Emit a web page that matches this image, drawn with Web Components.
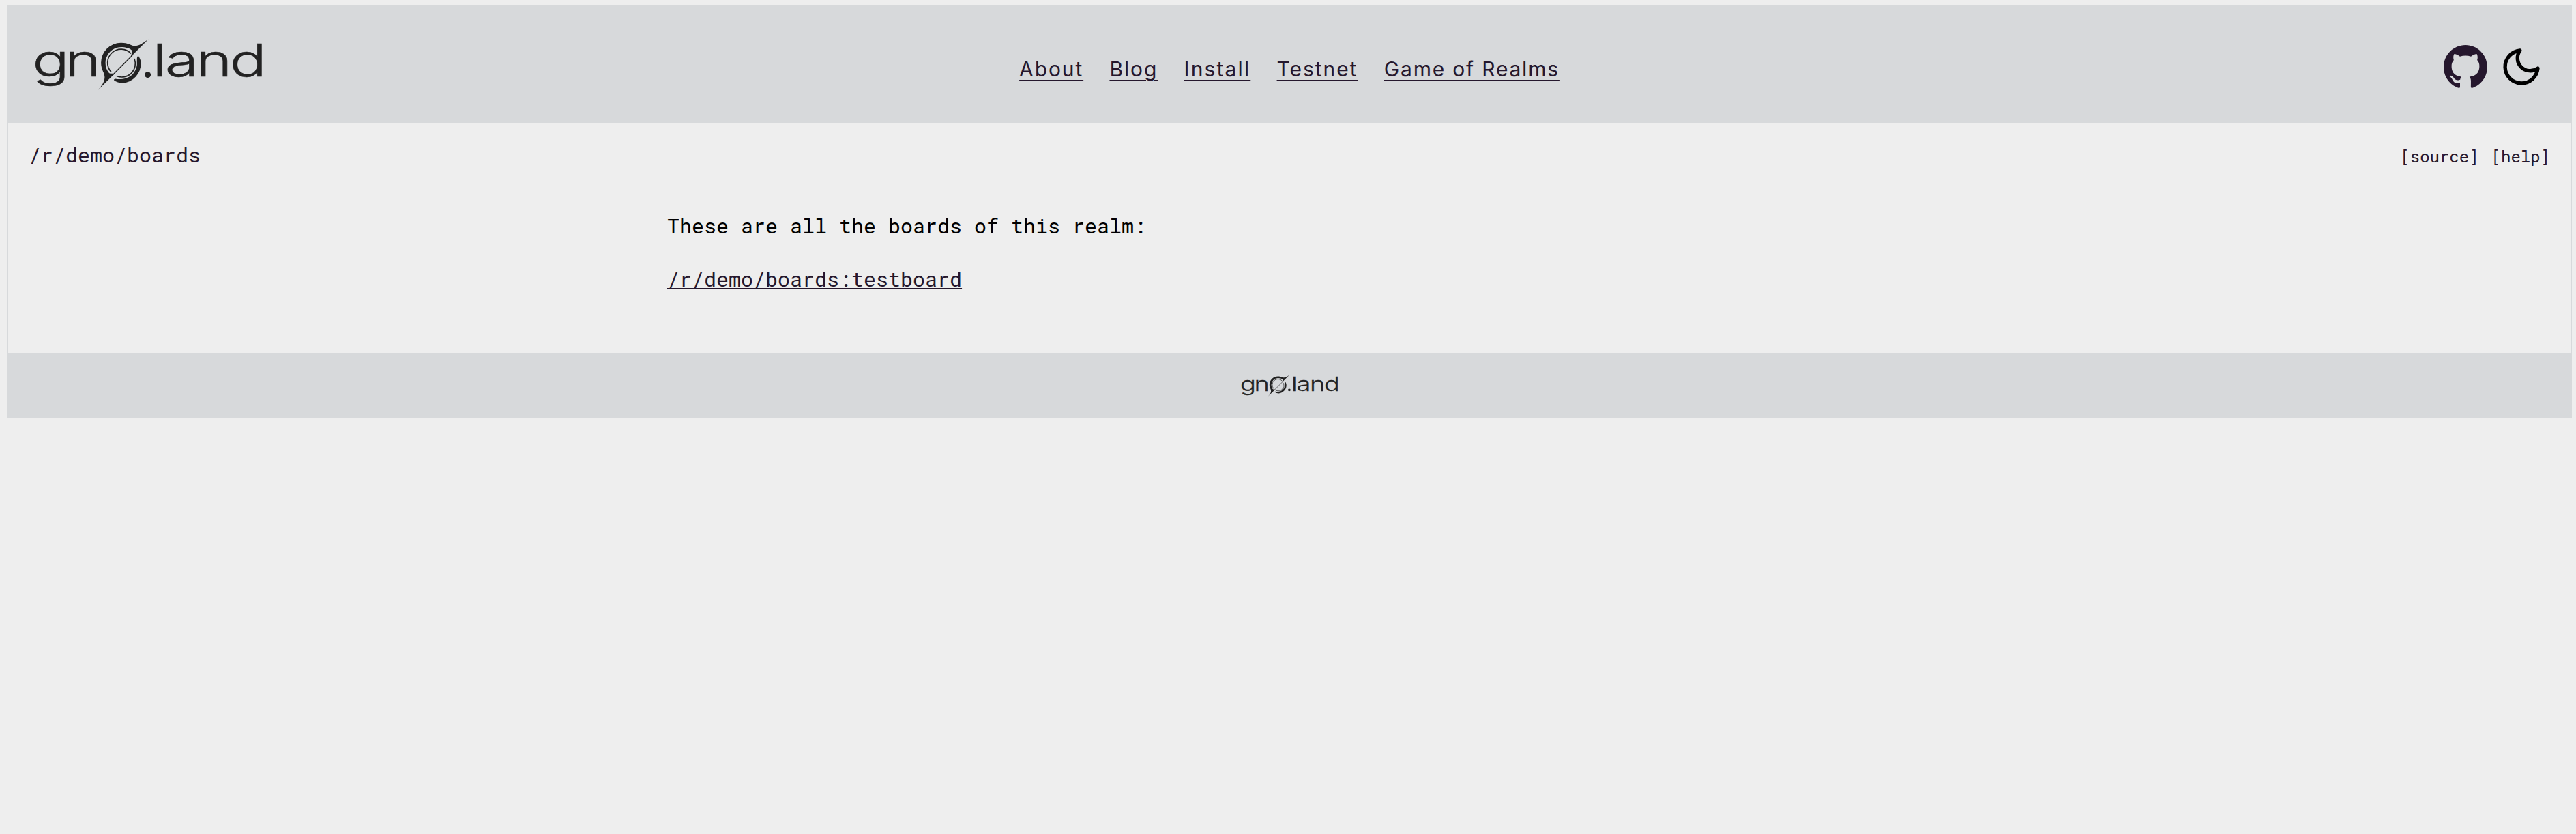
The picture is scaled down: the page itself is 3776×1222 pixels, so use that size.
<!DOCTYPE html>
<html lang="en">
<head>
<meta charset="utf-8">
<title>gno.land</title>
<style>
  html { background: #eee; }
  body { margin: 8px 6px 0 10px; font-family: "Roboto Mono", "Liberation Mono", monospace; font-size: 30px; line-height: 40px; color: #000; }
</style>
</head>
<body>
<gno-page>
  <gno-header slot="header">
    <gno-logo slot="logo" style="--w:332px"></gno-logo>
    <gno-link style="--ls:1.88px">About</gno-link>
    <gno-link style="--ls:1.9px">Blog</gno-link>
    <gno-link style="--ls:2.1px">Install</gno-link>
    <gno-link style="--ls:1.97px">Testnet</gno-link>
    <gno-link style="--ls:1.8px">Game of Realms</gno-link>
    <github-icon slot="tools"></github-icon>
    <moon-icon slot="tools"></moon-icon>
  </gno-header>
  <realm-bar path="/r/demo/boards"></realm-bar>
  <realm-content></realm-content>
  <gno-logo slot="footer" style="--w:141px"></gno-logo>
</gno-page>
<script>
const define = (name, html) => customElements.define(name, class extends HTMLElement {
  constructor() {
    super();
    this.attachShadow({ mode: 'open' }).innerHTML = html;
  }
  connectedCallback() {
    const path = this.shadowRoot.querySelector('[data-path]');
    if (path) path.textContent = this.getAttribute('path');
  }
});

define('gno-link', `
  <style>
    :host { display: block; }
    a { color: #25172d; font-family: Inter, sans-serif; letter-spacing: var(--ls); white-space: nowrap;
        text-decoration: underline; text-decoration-thickness: 2px; text-underline-offset: 5px; }
  </style>
  <a><slot></slot></a>`);

define('gno-logo', `
  <style>
    :host { display: block; width: var(--w); }
    svg { display: block; width: 100%; height: auto; overflow: visible; }
    text { font-family: Inter, sans-serif; font-size: 65.5px; font-weight: 310; fill: #222; stroke: #222; stroke-width: .6px; }
  </style>
  <svg viewBox="52 57 332 76" role="img">
    <text transform="scale(1.37 1)" y="112.4" x="34.7 69.6">gn</text>
    <text transform="scale(1.37 1)" y="112.4" x="163.2 176.4 209.9 245.8">land</text>
    <circle cx="216.6" cy="109.6" r="4.5" fill="#222"/>
    <g fill="#222">
      <path d="M217.5 57.5C209 63.5 203 67.8 197 67.2C191 66.6 188 62.7 177.5 62.7A29.3 29.3 0 0 0 148.1 92C148.1 103 154 107 153.4 114C153 121 148 127 143 132.5L167 109C164 106 162.5 109.5 159.5 106.5C156.5 103 154.6 98 154.6 92A23.3 23.3 0 0 1 177.5 68.900C184 68.9 190 70.5 193 73.5C195 76 192.300 79 192 83Z"/>
      <path d="M202.3 81.3C204.5 84 206.6 88 206.6 92.8A28 28.7 0 0 1 180 121.5Q172 121.5 167 117.5Q166.500 116 169 115.500Q174 116.400 180 115.800A23.500 23.500 0 0 0 200.800 90Q200 85 202.300 81.300Z"/>
    </g>
    <g fill="none" stroke="#222" stroke-width="1.7">
      <path d="M163 105.5A19.8 19.8 0 0 1 192 78.5"/>
      <path d="M197 86A19.8 19.8 0 0 1 171 111.5"/>
      <path d="M165 110L194 81" stroke-width="1.5"/>
    </g>
  </svg>`);

define('github-icon', `
  <style>:host { display: block; } svg { display: block; width: 64px; height: 63px; }</style>
  <svg viewBox="0 0 97.707 96.2"><path fill="#25172d" fill-rule="evenodd" d="M48.854 0C21.839 0 0 22 0 49.217c0 21.756 13.993 40.172 33.405 46.69 2.427.49 3.316-1.059 3.316-2.362 0-1.141-.08-5.052-.08-9.127-13.59 2.934-16.42-5.867-16.42-5.867-2.184-5.704-5.42-7.17-5.42-7.17-4.448-3.015.324-3.015.324-3.015 4.934.326 7.523 5.052 7.523 5.052 4.367 7.496 11.404 5.378 14.235 4.074.404-3.178 1.699-5.378 3.074-6.6-10.839-1.141-22.243-5.378-22.243-24.283 0-5.378 1.94-9.778 5.014-13.2-.485-1.222-2.184-6.275.486-13.038 0 0 4.125-1.304 13.426 5.052a46.97 46.97 0 0 1 12.214-1.63c4.125 0 8.33.571 12.213 1.63 9.302-6.356 13.427-5.052 13.427-5.052 2.67 6.763.97 11.816.485 13.038 3.155 3.422 5.015 7.822 5.015 13.2 0 18.905-11.404 23.06-22.324 24.283 1.78 1.548 3.316 4.481 3.316 9.126 0 6.6-.08 11.897-.08 13.526 0 1.304.89 2.853 3.316 2.364 19.412-6.52 33.405-24.935 33.405-46.691C97.707 22 75.788 0 48.854 0z"/></svg>`);

define('moon-icon', `
  <style>:host { display: block; } svg { display: block; width: 64px; height: 64px; }</style>
  <svg viewBox="0 0 24 24" fill="none" stroke="#000" stroke-width="2" stroke-linecap="round" stroke-linejoin="round"><path d="M21 12.79A9 9 0 1 1 11.21 3 7 7 0 0 0 21 12.79z"/></svg>`);

define('gno-header', `
  <style>
    :host { display: grid; grid-template-columns: 1fr auto 1fr; height: 170px; background: #d7d9db; padding: 0 40px; }
    .logo { padding-top: 47px; }
    nav { display: flex; gap: 38.3px; padding-top: 71px; }
    .tools { display: flex; justify-content: flex-end; gap: 18px; padding-top: 56px; }
  </style>
  <div class="logo"><slot name="logo"></slot></div>
  <nav><slot></slot></nav>
  <div class="tools"><slot name="tools"></slot></div>`);

define('realm-bar', `
  <style>
    :host { display: flex; justify-content: space-between; align-items: baseline; padding: 27px 30px 0 30px; color: #25172d; }
    .links { display: flex; gap: 18px; font-size: 24px; line-height: 32px; }
    a { text-decoration: underline; text-decoration-thickness: 1px; text-underline-offset: 2px; }
  </style>
  <span data-path></span>
  <div class="links"><a>[source]</a><a>[help]</a></div>`);

define('realm-content', `
  <style>
    :host { display: block; padding: 64px 0 88px 966px; }
    p { margin: 0 0 38px; }
    p:last-child { margin: 0; }
    a { color: #25172d; text-decoration: underline; text-decoration-thickness: 1px; text-underline-offset: 2px; }
  </style>
  <p>These are all the boards of this realm:</p>
  <p><a>/r/demo/boards:testboard</a></p>`);

define('gno-page', `
  <style>
    :host { display: block; border: 2px solid #d7d9db; }
    footer { display: flex; justify-content: center; height: 94px; background: #d7d9db; box-sizing: border-box; padding-top: 32px; }
  </style>
  <slot name="header"></slot>
  <main><slot></slot></main>
  <footer><slot name="footer"></slot></footer>`);
</script>
</body>
</html>
